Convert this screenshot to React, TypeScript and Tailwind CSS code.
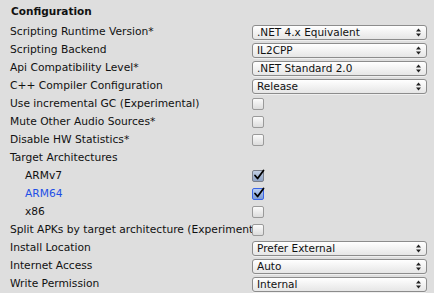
import type { ReactNode } from 'react'

type Row =
  | { kind: 'select'; label: string; value: string }
  | { kind: 'check'; label: string; checked?: boolean; indent?: boolean; focus?: boolean }
  | { kind: 'label'; label: string }

const rows: Row[] = [
  { kind: 'select', label: 'Scripting Runtime Version*', value: '.NET 4.x Equivalent' },
  { kind: 'select', label: 'Scripting Backend', value: 'IL2CPP' },
  { kind: 'select', label: 'Api Compatibility Level*', value: '.NET Standard 2.0' },
  { kind: 'select', label: 'C++ Compiler Configuration', value: 'Release' },
  { kind: 'check', label: 'Use incremental GC (Experimental)' },
  { kind: 'check', label: 'Mute Other Audio Sources*' },
  { kind: 'check', label: 'Disable HW Statistics*' },
  { kind: 'label', label: 'Target Architectures' },
  { kind: 'check', label: 'ARMv7', checked: true, indent: true },
  { kind: 'check', label: 'ARM64', checked: true, indent: true, focus: true },
  { kind: 'check', label: 'x86', indent: true },
  { kind: 'check', label: 'Split APKs by target architecture (Experimental)' },
  { kind: 'select', label: 'Install Location', value: 'Prefer External' },
  { kind: 'select', label: 'Internet Access', value: 'Auto' },
  { kind: 'select', label: 'Write Permission', value: 'Internal' },
]

function Popup({ value }: { value: string }) {
  return (
    <div className="flex h-[15px] w-[175px] items-center justify-between rounded-[3px] border border-[#8c8c8c] bg-gradient-to-b from-[#ffffff] to-[#e6e6e6] pl-[4px] pr-[4px] shadow-[0_1px_0_rgba(255,255,255,0.5)]">
      <span className="text-[10.5px] leading-none text-[#111]">{value}</span>
      <svg width="5" height="9" viewBox="0 0 5 9" className="mr-[1px]">
        <path d="M2.5 0.5 L5 3.5 L0 3.5 Z" fill="#222" />
        <path d="M2.5 8.5 L5 5.5 L0 5.5 Z" fill="#222" />
      </svg>
    </div>
  )
}

function Check({ checked, focus }: { checked?: boolean; focus?: boolean }) {
  return (
    <div
      className={
        checked
          ? focus
            ? 'relative h-[12px] w-[12px] rounded-[2px] border border-[#3a64e8] bg-gradient-to-b from-[#b9cdf0] to-[#7d9cd6]'
            : 'relative h-[12px] w-[12px] rounded-[2px] border border-[#7a7f8a] bg-gradient-to-b from-[#c2cfe4] to-[#8ea3c6]'
          : 'relative h-[12px] w-[12px] rounded-[2px] border border-[#9a9a9a] bg-gradient-to-b from-[#fbfbfb] to-[#dcdcdc]'
      }
    >
      {checked && (
        <svg width="12" height="12" viewBox="0 0 12 12" className="absolute left-[0px] top-[-2px]">
          <path d="M2 6.5 L4.6 9.5 L10.5 1.5" stroke="#000" strokeWidth="1.8" fill="none" strokeLinecap="round" strokeLinejoin="round" />
        </svg>
      )}
    </div>
  )
}

function Field({ row }: { row: Row }) {
  let control: ReactNode = null
  if (row.kind === 'select') control = <Popup value={row.value} />
  if (row.kind === 'check') control = <Check checked={row.checked} focus={row.focus} />
  const indent = row.kind === 'check' && row.indent
  const blue = row.kind === 'check' && row.focus
  return (
    <div className="flex h-[18px] items-center">
      <div
        className={
          'w-[252px] shrink-0 overflow-hidden whitespace-nowrap text-[10.7px] ' +
          (indent ? 'pl-[25px] ' : 'pl-[10px] ') +
          (blue ? 'text-[#1d4fe6]' : 'text-[#111]')
        }
      >
        {row.label}
      </div>
      {control}
    </div>
  )
}

export default function App() {
  return (
    <div className="h-[293px] w-[434px] overflow-hidden bg-[#dedede] font-['Lucida_Grande','DejaVu_Sans',sans-serif]">
      <div className="flex h-[23px] items-center pl-[11px] text-[10.5px] font-bold text-[#111]">Configuration</div>
      {rows.map((r) => (
        <Field key={r.label} row={r} />
      ))}
    </div>
  )
}
